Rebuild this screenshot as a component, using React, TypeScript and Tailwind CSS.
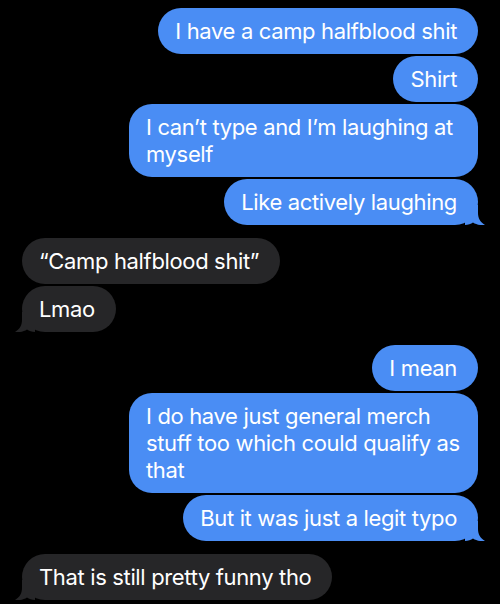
import React from 'react';

type Msg = { text: string[]; me: boolean; tail?: boolean; gap?: string; wide?: boolean };

const messages: Msg[] = [
  { text: ['I have a camp halfblood shit'], me: true, gap: 'mt-2' },
  { text: ['Shirt'], me: true, gap: 'mt-[2px]' },
  { text: ["I can\u2019t type and I\u2019m laughing at", 'myself'], me: true, gap: 'mt-[2px]', wide: true },
  { text: ['Like actively laughing'], me: true, tail: true, gap: 'mt-[2px]' },
  { text: ['\u201cCamp halfblood shit\u201d'], me: false, gap: 'mt-[13px]' },
  { text: ['Lmao'], me: false, tail: true, gap: 'mt-[2px]' },
  { text: ['I mean'], me: true, gap: 'mt-[13px]' },
  { text: ['I do have just general merch', 'stuff too which could qualify as', 'that'], me: true, gap: 'mt-[2px]', wide: true },
  { text: ['But it was just a legit typo'], me: true, tail: true, gap: 'mt-[2px]' },
  { text: ['That is still pretty funny tho'], me: false, tail: true, gap: 'mt-[13px]' },
];

function Tail({ me }: { me: boolean }) {
  return (
    <svg
      viewBox="0 0 20 20"
      className={`absolute bottom-0 w-5 h-5 ${me ? 'right-[-7px] fill-[#4a8df4]' : 'left-[-7px] -scale-x-100 fill-[#262628]'}`}
    >
      <path d="M0 0 H13 V8 C13 13 15 17 20 20 C15 20.5 11 19.5 8 17.5 C6 19 3 20 0 20 Z" />
    </svg>
  );
}

export default function App() {
  return (
    <div className="w-[500px] h-[604px] bg-black overflow-hidden flex flex-col px-[22px] font-['Inter',sans-serif] text-white text-[22px] leading-[27px] tracking-[-0.35px]">
      {messages.map((m, i) => (
        <div key={i} className={`flex ${m.me ? 'justify-end' : 'justify-start'} ${m.gap}`}>
          <div
            className={`relative rounded-[23px] pl-[17px] pr-[21px] py-[9.5px] whitespace-nowrap ${m.wide ? 'w-[349px]' : ''} ${
              m.me ? 'bg-[#4a8df4]' : 'bg-[#262628]'
            }`}
          >
            {m.text.map((line, j) => (
              <div key={j} className="relative z-10">{line}</div>
            ))}
            {m.tail && <Tail me={m.me} />}
          </div>
        </div>
      ))}
    </div>
  );
}
